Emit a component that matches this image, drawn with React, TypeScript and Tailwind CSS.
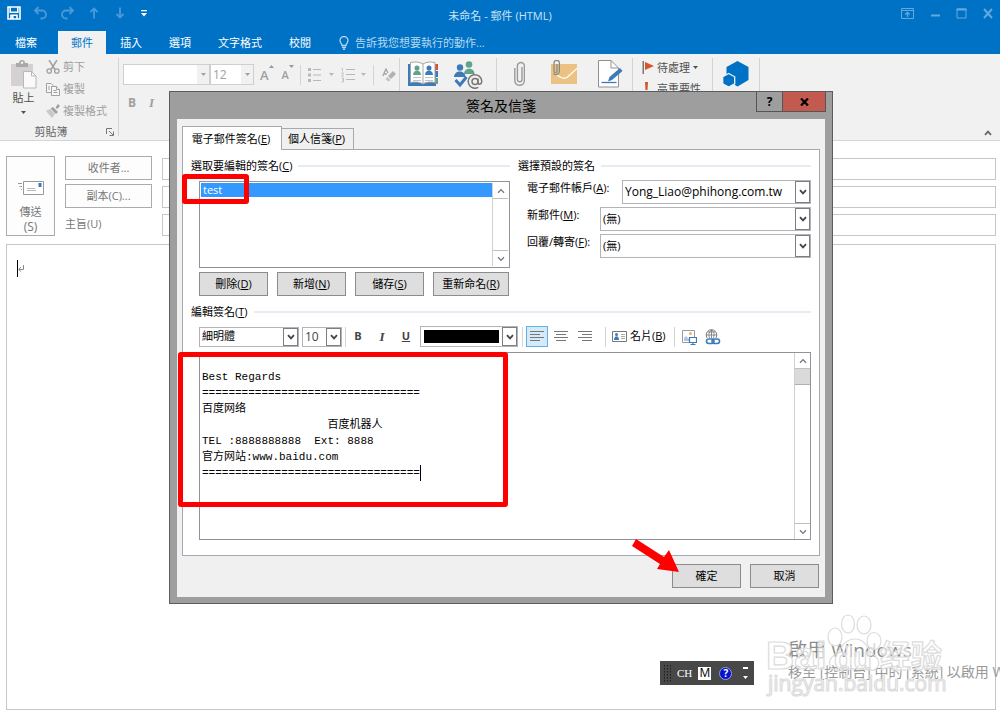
import { useState } from "react";
import type { ReactNode } from "react";

const signatureText = [
  "",
  "Best Regards",
  "=================================",
  "百度网络",
  "                   百度机器人",
  "TEL :8888888888  Ext: 8888",
  "官方网站:www.baidu.com",
  "=================================",
].join("\n");

const Caret = ({ className = "" }: { className?: string }) => (
  <svg width="5" height="3" viewBox="0 0 5 3" className={className}>
    <path d="M0 0h5L2.5 3z" fill="currentColor" />
  </svg>
);

const Chevron = ({ up = false, bold = false }) => (
  <svg width="8" height="6" viewBox="0 0 8 6" fill="none">
    <path
      d={up ? "M1 4.8L4 1.6l3 3.2" : "M1 1.2l3 3.2 3-3.2"}
      stroke="currentColor"
      strokeWidth={bold ? 1.8 : 1.3}
    />
  </svg>
);

const Divider = ({ className = "" }: { className?: string }) => (
  <div className={`w-px shrink-0 bg-[#d4d4d4] ${className}`} />
);

const QuickAccess = () => (
  <div className="flex items-center gap-3 pl-[7px] text-[#4b9ad7]">
    <button aria-label="儲存" className="text-white">
      <svg width="14" height="14" viewBox="0 0 14 14" fill="none">
        <path
          d="M1 1h12v12H1zM3.2 1v5.2h7.6V1M4 13V9.3h6V13"
          stroke="currentColor"
          strokeWidth="1.6"
        />
        <path d="M4.6 10h2v3h-2z" fill="currentColor" />
      </svg>
    </button>
    <button aria-label="復原">
      <svg width="15" height="14" viewBox="0 0 15 14" fill="none">
        <path
          d="M5.5 1L2 4.5 5.5 8M2 4.5h7a4 4 0 0 1 0 8H7.5"
          stroke="currentColor"
          strokeWidth="1.8"
        />
      </svg>
    </button>
    <button aria-label="重複">
      <svg width="15" height="14" viewBox="0 0 15 14" fill="none">
        <path
          d="M9.5 1L13 4.5 9.5 8M13 4.5H6a4 4 0 0 0 0 8h1.5"
          stroke="currentColor"
          strokeWidth="1.8"
        />
      </svg>
    </button>
    <button aria-label="上一個項目" className="px-0.5">
      <svg width="10" height="12" viewBox="0 0 10 12" fill="none">
        <path d="M5 11.5v-10M1.5 5L5 1.5 8.5 5" stroke="currentColor" strokeWidth="1.8" />
      </svg>
    </button>
    <button aria-label="下一個項目" className="px-0.5">
      <svg width="10" height="12" viewBox="0 0 10 12" fill="none">
        <path d="M5 .5v10M1.5 7L5 10.500 8.500 7" stroke="currentColor" strokeWidth="1.8" />
      </svg>
    </button>
    <button aria-label="自訂快速存取工具列" className="pl-0.5 text-white">
      <svg width="6" height="7" viewBox="0 0 6 7" fill="currentColor">
        <path d="M0 0h6v1.3H0zM0 3h6L3 6.5z" />
      </svg>
    </button>
  </div>
);

const WindowControls = () => (
  <div className="flex items-center gap-[15px] pr-1.5 text-[#62a9de]">
    <button aria-label="功能區顯示選項">
      <svg width="13" height="11" viewBox="0 0 13 11" fill="none" stroke="currentColor">
        <path d="M.5.5h12v10H.5zM.5 2.5h12" />
        <path d="M6.5 9V4.5M4.3 6.5l2.2-2.2 2.2 2.2" strokeWidth="1.3" />
      </svg>
    </button>
    <button aria-label="最小化">
      <svg width="12" height="11" viewBox="0 0 12 11">
        <path d="M2 6.5h9v2H2z" fill="currentColor" />
      </svg>
    </button>
    <button aria-label="最大化">
      <svg width="11" height="11" viewBox="0 0 11 11" fill="none" stroke="currentColor">
        <path d="M1 1h9v9H1z" />
        <path d="M.5 1.5h10" strokeWidth="2" />
      </svg>
    </button>
    <button aria-label="關閉">
      <svg width="12" height="11" viewBox="0 0 12 11" stroke="currentColor" strokeWidth="2">
        <path d="M2 1l8 9M10 1L2 10" />
      </svg>
    </button>
  </div>
);

const ClipboardGroup = () => (
  <div className="flex w-[118px] flex-col pl-2 pr-1 pt-0.5 text-[#a0a0a0]">
    <div className="flex h-[66px]">
      <button className="flex w-[31px] flex-col items-center pt-1 text-[#505050]">
        <svg width="27" height="29" viewBox="0 0 27 29" className="shrink-0">
          <path d="M1 4h22v22H1z" fill="#d5d1d3" />
          <path d="M6 3h3a3 3 0 0 1 6 0h3v4H6z" fill="#a9a9a9" />
          <circle cx="12" cy="2.8" r="1.3" fill="#f1f1f1" />
          <path d="M13.5 11.5h8l4.5 4.5v12H13.500z" fill="#fafafa" stroke="#b8b8b8" />
          <path d="M21.5 11.5V16H26" fill="none" stroke="#b8b8b8" />
        </svg>
        <span className="text-[11px] leading-[18px] whitespace-nowrap">貼上</span>
        <Caret className="mt-1 shrink-0" />
      </button>
      <div className="ml-[7px] flex flex-col text-[11px] leading-[22px]">
        <button className="flex items-center gap-[3px]">
          <svg width="14" height="14" viewBox="0 0 14 14" fill="none" stroke="currentColor">
            <path d="M3 0l6 9.500M11 0L5 9.500" strokeWidth="1.5" />
            <circle cx="3.2" cy="11" r="2.2" strokeWidth="1.3" />
            <circle cx="10.8" cy="11" r="2.2" strokeWidth="1.3" />
          </svg>
          剪下
        </button>
        <button className="flex items-center gap-[3px]">
          <svg width="14" height="13" viewBox="0 0 14 13" fill="#f6f6f6" stroke="currentColor">
            <path d="M.5.5H5l2 2v7H.5z" />
            <path d="M5.5 3.5h5l3 3v6h-8z" />
            <path d="M2 4h2M2 6h2M7.5 7.5h3M7.5 9.5h4M10.5 3.5v3h3" />
          </svg>
          複製
        </button>
        <button className="flex items-center gap-[3px] whitespace-nowrap">
          <svg width="14" height="14" viewBox="0 0 14 14">
            <path d="M0 7l4-2 5 5-3 4z" fill="#cbc6c9" />
            <path d="M4.5 4.5L7 3l5 5-2 2zM9.5 3.5L12 0l2 2-3 3z" fill="currentColor" />
          </svg>
          複製格式
        </button>
      </div>
    </div>
    <div className="flex items-center text-[11px] leading-5 text-[#666]">
      <span className="flex-1 pr-3 text-center">剪貼簿</span>
      <button aria-label="剪貼簿選項">
        <svg width="8" height="8" viewBox="0 0 8 8" fill="none" stroke="#777">
          <path d="M.5 6V.5H6M3 3l4 4M7.5 3.5v4h-4" />
        </svg>
      </button>
    </div>
  </div>
);

const FontGroup = () => (
  <div className="flex w-[280px] flex-col pl-1 pt-2.5 text-[#a0a0a0]">
    <div className="flex h-[21px] items-center">
      <div className="flex h-full w-[87px] border border-[#cfcfcf] bg-white">
        <input aria-label="字型" className="min-w-0 flex-1 outline-none" />
        <button aria-label="選擇字型" className="flex w-3 items-center justify-center bg-[#f1f1f1]">
          <Caret />
        </button>
      </div>
      <div className="flex h-full w-11 border border-[#cfcfcf] bg-white">
        <input
          aria-label="字型大小"
          defaultValue="12"
          className="min-w-0 flex-1 pl-0.5 text-[12px] outline-none"
        />
        <button aria-label="選擇大小" className="flex w-3 items-center justify-center bg-[#f1f1f1]">
          <Caret />
        </button>
      </div>
      <button aria-label="放大字型" className="ml-1.5 flex text-[13px] leading-5 font-semibold">
        A
        <svg width="5" height="3" viewBox="0 0 5 3">
          <path d="M0 3l2.5-3L5 3z" fill="#999" />
        </svg>
      </button>
      <button aria-label="縮小字型" className="ml-2 flex text-[11px] leading-5 font-semibold">
        A
        <svg width="5" height="3" viewBox="0 0 5 3">
          <path d="M0 0h5L2.5 3z" fill="#999" />
        </svg>
      </button>
      <Divider className="ml-1.5 h-5" />
      <button aria-label="項目符號" className="ml-[7px] flex items-center gap-2 text-[#b8b8b8]">
        <svg width="13" height="14" viewBox="0 0 13 14" fill="currentColor">
          <path d="M0 0h3v3H0zM0 5.5h3v3H0zM0 11h3v3H0zM5 1h8v1H5zM5 6.5h8v1H5zM5 12h8v1H5z" />
        </svg>
        <Caret />
      </button>
      <button aria-label="編號" className="ml-[7px] flex items-center gap-1.5 text-[#b8b8b8]">
        <svg width="14" height="16" viewBox="0 0 14 16" fill="none" stroke="currentColor">
          <path d="M5 2.5h9M5 7.5h9M5 12.5h9" />
          <path d="M.5 1.5h1v3M.5 6h2L.8 9h2M.5 11h2v2h-1 1v2h-2" strokeWidth=".8" />
        </svg>
        <Caret />
      </button>
      <Divider className="ml-[7px] h-5" />
      <button aria-label="清除格式設定" className="ml-2">
        <svg width="14" height="14" viewBox="0 0 14 14">
          <path d="M.8 8L4 1l2 4M2 6h3" fill="none" stroke="#a8a8a8" strokeWidth="1.4" />
          <path d="M6 8l5-5 3 3-5 5z" fill="#b5b0b3" />
          <path d="M5.5 9l3 3-2 1.5L3.500 11z" fill="#c4bfc2" />
        </svg>
      </button>
    </div>
    <div className="mt-2 flex gap-[13px] pl-[5px] text-[12px] leading-5">
      <button className="font-bold">B</button>
      <button className="font-['Liberation_Serif',serif] text-[13px] font-bold italic">I</button>
    </div>
  </div>
);

const NamesGroup = () => (
  <div className="flex w-24 items-start gap-4 pl-2 pt-[7px]">
    <button aria-label="通訊錄">
      <svg width="30" height="27" viewBox="0 0 30 27">
        <path d="M0 3h28v22H0z" fill="#3d7ab8" />
        <path d="M27 3h3v6h-3z" fill="#d9532c" />
        <path d="M27 10h3v6h-3z" fill="#3d7ab8" />
        <path d="M27 17h3v6h-3z" fill="#5fa38c" />
        <path
          d="M2.5 1.500C7 .5 12 1 15 3c3-2 7-2.500 12-1.500v20c-5-1-9-.5-12 1.500-3-2-8-2.500-12.500-1.500z"
          fill="#fff"
          stroke="#a5a5a5"
        />
        <path d="M15 3v20" stroke="#a5a5a5" />
        <circle cx="9" cy="7" r="2.500" fill="#5fa38c" />
        <path d="M5 14c0-6 8-6 8 0z" fill="#5fa38c" />
        <circle cx="21" cy="7" r="2.500" fill="#3d7ab8" />
        <path d="M17 14c0-6 8-6 8 0z" fill="#3d7ab8" />
        <path d="M5 16.500h8M5 19.500h8M17 16.500h8M17 19.500h8" stroke="#c4c4c4" />
      </svg>
    </button>
    <button aria-label="檢查名稱">
      <svg width="29" height="29" viewBox="0 0 29 29">
        <circle cx="15" cy="3.500" r="3.300" fill="#5fa38c" />
        <path d="M10 13c0-7 10.500-7 10.500 0z" fill="#5fa38c" />
        <circle cx="6" cy="6.500" r="3.800" fill="#f1f1f1" />
        <circle cx="6" cy="6.500" r="3.200" fill="#3d7ab8" />
        <path d="M0 16c0-7.500 11.500-7.500 11.500 0z" fill="#3d7ab8" />
        <path d="M1.500 19l4.500 5 6.500-8" fill="none" stroke="#3d7ab8" strokeWidth="3" />
        <g fill="none" stroke="#777" strokeWidth="1.500">
          <circle cx="21" cy="20.500" r="3" />
          <path d="M24 17.500V22c0 2 3.800 1.500 3.800-1.800a6.800 6.800 0 1 0-3.500 6.200" />
        </g>
      </svg>
    </button>
  </div>
);

const IncludeGroup = () => (
  <div className="flex w-[135px] items-start pl-[17px] pt-1.5 pr-2">
    <button aria-label="附加檔案">
      <svg width="11" height="27" viewBox="0 0 11 27" fill="none">
        <path
          d="M8 7v12.500a2.300 2.300 0 0 1-4.600 0V6a3.500 3.500 0 0 1 7 0v14.500a4.800 4.800 0 0 1-9.600 0V8"
          stroke="#9a9a9a"
          strokeWidth="1.400"
        />
      </svg>
    </button>
    <button aria-label="附加項目" className="ml-[25px]">
      <svg width="27" height="24" viewBox="0 0 27 24" fill="none">
        <path d="M1 4h26v20H1z" fill="#ebc283" />
        <path d="M5 14l6 3.500c2 1 4 1 6 0L27 8.500" stroke="#fff" strokeWidth="1.300" />
        <path
          d="M7 4v7a1.500 1.500 0 0 1-3 0V3a2.700 2.700 0 0 1 5.400 0v8.500a3.500 3.500 0 0 1-6 2"
          stroke="#858585"
          strokeWidth="1.200"
        />
      </svg>
    </button>
    <button aria-label="簽名" className="ml-[21px]">
      <svg width="26" height="28" viewBox="0 0 26 28">
        <path d="M.5.5H13l7.500 7.500v19H.5z" fill="#fff" stroke="#909090" />
        <path d="M13 .5V8h7.500" fill="none" stroke="#909090" />
        <path d="M3.500 22.500h15" stroke="#3d7ab8" strokeWidth="1.300" />
        <path d="M10 21.500l1.500-4.500L22 8l2.500 3L14 20z" fill="#3d7ab8" />
      </svg>
    </button>
  </div>
);

const TagsGroup = () => (
  <div className="flex w-[79px] flex-col pl-[9px] pt-[3px] text-[11px] leading-[21px] text-[#505050]">
    <button className="flex items-center whitespace-nowrap">
      <svg width="12" height="14" viewBox="0 0 12 14" className="mr-[3px]">
        <path d="M.5 0h1.500v13H.5z" fill="#777" />
        <path d="M3 1l9 4-9 4z" fill="#d9532c" />
      </svg>
      待處理
      <Caret className="ml-[3px]" />
    </button>
    <button className="flex items-center whitespace-nowrap">
      <svg width="12" height="13" viewBox="0 0 12 13" className="mr-[3px]">
        <path d="M3 0h3l-.5 8h-2zM3.500 10h2v2.500h-2z" fill="#d9532c" />
      </svg>
      高重要性
    </button>
  </div>
);

const Ribbon = () => (
  <div className="flex h-[87px] border-b border-[#d5d5d5] bg-[#f1f1f1]">
    <ClipboardGroup />
    <Divider className="my-1" />
    <FontGroup />
    <Divider className="my-1" />
    <NamesGroup />
    <Divider className="my-1" />
    <IncludeGroup />
    <Divider className="my-1" />
    <TagsGroup />
    <Divider className="my-1" />
    <div className="flex w-[46px] items-start justify-center pt-[7px]">
      <button aria-label="Office 增益集">
        <svg width="26" height="26" viewBox="0 0 26 26">
          <path d="M14.500 0L25.500 6v13l-11 6.500L3.500 19V6z" fill="#0072c6" />
          <path d="M5.700 12.500l6 3.300v7l-6 3.200-6-3.200v-7z" fill="#0072c6" stroke="#f1f1f1" strokeWidth="1.300" />
        </svg>
      </button>
    </div>
    <Divider className="my-1" />
    <button aria-label="摺疊功能區" className="ml-auto self-end px-2 py-1 text-[#666]">
      <Chevron up bold />
    </button>
  </div>
);

const ComposeHeader = () => (
  <div className="flex pl-1.5 pr-1 pt-[15px] text-[12px] text-[#777]">
    <button className="flex h-20 w-[49px] flex-col items-center border border-[#ababab] bg-[#fdfdfd] pt-6">
      <svg width="26" height="14" viewBox="0 0 26 14" fill="none">
        <path d="M5.500.5h20v13h-20z" fill="#fff" stroke="#999" />
        <path d="M20.500 2h3v4h-3z" fill="#3d7ab8" />
        <path d="M9 7.500h8M9 9.500h9" stroke="#bbb" />
        <path d="M0 2.500h4M1.500 5.500H4M3 8.500h1" stroke="#999" />
      </svg>
      <span className="mt-2 text-[11px] leading-[18px]">傳送</span>
      <span className="leading-3">(S)</span>
    </button>
    <div className="ml-2.5 flex w-[87px] flex-col gap-1">
      <button className="h-6 border border-[#ababab] bg-[#fdfdfd] text-[11px]">收件者...</button>
      <button className="h-6 border border-[#ababab] bg-[#fdfdfd] text-[11px]">副本(C)...</button>
      <label htmlFor="subject" className="text-[11px] leading-6">
        主旨(U)
      </label>
    </div>
    <div className="ml-2.5 flex flex-1 flex-col gap-1.5 pt-0.5">
      <input aria-label="收件者" className="h-[22px] border border-[#c6c6c6]" />
      <input aria-label="副本" className="h-[22px] border border-[#c6c6c6]" />
      <input id="subject" className="h-[22px] border border-[#c6c6c6]" />
    </div>
  </div>
);

const SectionTitle = ({ children }: { children: ReactNode }) => (
  <div className="flex items-center gap-1.5">
    <h3 className="text-[11px] leading-4 whitespace-nowrap">{children}</h3>
    <div className="h-0.5 flex-1 bg-[#e6ecf1]" />
  </div>
);

type PickerProps = {
  id?: string;
  label?: string;
  options: string[];
  className: string;
};

const Picker = ({ id, label, options, className }: PickerProps) => (
  <div className={`flex border border-[#b4b4b8] bg-white ${className}`}>
    <select
      id={id}
      aria-label={label}
      className="min-w-0 flex-1 appearance-none bg-transparent pl-0.5 outline-none"
    >
      {options.map((o) => (
        <option key={o}>{o}</option>
      ))}
    </select>
    <div className="pointer-events-none flex w-[15px] items-center justify-center border border-[#7d7d85] text-[#444]">
      <Chevron bold />
    </div>
  </div>
);

const DialogButton = ({ children, className = "w-[69px]" }: { children: ReactNode; className?: string }) => (
  <button
    className={`h-6 border border-[#8c8c8c] bg-[#dedede] text-[11px] leading-4 whitespace-nowrap ${className}`}
  >
    {children}
  </button>
);

const ScrollBar = ({ thumb = false }) => (
  <div className="flex w-4 shrink-0 flex-col border-l border-[#d0d0d0] text-[#777]">
    <button aria-label="向上捲動" className="flex h-4 items-center justify-center border-b border-[#c0c0c0]">
      <Chevron up />
    </button>
    {thumb && <div className="h-4 border-b border-[#b0b0b0] bg-[#dadada]" />}
    <button
      aria-label="向下捲動"
      className="mt-auto flex h-4 items-center justify-center border-t border-[#c0c0c0]"
    >
      <Chevron />
    </button>
  </div>
);

const AlignIcon = ({ d }: { d: string }) => (
  <svg width="14" height="11" viewBox="0 0 14 11" stroke="#777" fill="none">
    <path d={d} />
  </svg>
);

const SignatureToolbar = () => (
  <div className="flex h-[21px] items-center text-[#444]">
    <Picker label="字型" options={["細明體"]} className="h-5 w-[100px] text-[11px] text-black" />
    <Picker label="字型大小" options={["10"]} className="ml-[3px] h-5 w-10 text-[12px]" />
    <Divider className="ml-[3px] h-5 bg-[#b4b4b4]" />
    <button className="ml-0.5 w-5 text-center text-[11px] font-bold">B</button>
    <button className="ml-1 w-5 text-center font-['Liberation_Serif',serif] text-[13px] font-bold italic">
      I
    </button>
    <button className="ml-1 w-5 text-center text-[11px] font-bold underline">U</button>
    <div className="ml-1 flex h-[21px] w-[98px] border border-[#b4b4b8] bg-white">
      <button aria-label="字型色彩" className="m-[3px] flex-1 bg-black" />
      <button
        aria-label="選擇色彩"
        className="flex w-[15px] items-center justify-center border border-[#7d7d85]"
      >
        <Chevron bold />
      </button>
    </div>
    <Divider className="ml-1 h-5 bg-[#b4b4b4]" />
    <button
      aria-label="靠左對齊"
      className="ml-[3px] flex h-[21px] w-[22px] items-center justify-center border border-[#5db1e6] bg-[#d4eafa]"
    >
      <AlignIcon d="M0 .5h14M0 3.500h10M0 6.500h14M0 9.500h10" />
    </button>
    <button aria-label="置中" className="ml-1.5">
      <AlignIcon d="M0 .5h14M2 3.500h10M0 6.500h14M2 9.500h10" />
    </button>
    <button aria-label="靠右對齊" className="ml-2.5">
      <AlignIcon d="M0 .5h14M4 3.500h10M0 6.500h14M4 9.500h10" />
    </button>
    <Divider className="ml-[13px] h-5 bg-[#b4b4b4]" />
    <button className="ml-1.5 flex items-center gap-[3px] text-[11px] whitespace-nowrap text-black">
      <svg width="15" height="11" viewBox="0 0 15 11">
        <path d="M.5.5h14v10H.5z" fill="#fff" stroke="#777" />
        <circle cx="4.500" cy="3.500" r="1.500" fill="#3d7ab8" />
        <path d="M2 9c0-5 5-5 5 0z" fill="#3d7ab8" />
        <path d="M9 3.500h4M9 5.500h4M9 7.500h4" stroke="#aaa" />
      </svg>
      <span>
        名片(<u>B</u>)
      </span>
    </button>
    <Divider className="ml-2 h-5 bg-[#b4b4b4]" />
    <button aria-label="圖片" className="ml-[7px]">
      <svg width="15" height="16" viewBox="0 0 15 16">
        <path d="M.5 1.500h12v12H.5z" fill="#fff" stroke="#9a9a9a" />
        <path d="M2 12V9l2-2 3 3v2z" fill="#a9c9e6" />
        <circle cx="8.500" cy="4.500" r="1.500" fill="#e8b26a" />
        <path d="M7.500 8.500h7v5h-7z" fill="#fff" stroke="#3d7ab8" strokeWidth="1.200" />
        <path d="M11 13.500V15M8.500 15.500h5" stroke="#3d7ab8" strokeWidth="1.200" />
      </svg>
    </button>
    <button aria-label="超連結" className="ml-2">
      <svg width="16" height="16" viewBox="0 0 16 16" fill="none">
        <circle cx="6.500" cy="6" r="5.300" stroke="#808080" />
        <path
          d="M1 6h11M6.500.7v10.500M2.500 3h8M6.500.7C3 3.700 3 7.700 6.500 11.200M6.500.7c3.500 3 3.500 7 0 10.500"
          stroke="#808080"
          strokeWidth=".9"
        />
        <path d="M0 9h16v7H0z" fill="#fff" />
        <rect x="1.500" y="10" width="7.500" height="4.500" rx="2.200" stroke="#3d7ab8" strokeWidth="1.600" />
        <rect x="7" y="10" width="7.500" height="4.500" rx="2.200" stroke="#3d7ab8" strokeWidth="1.600" />
      </svg>
    </button>
  </div>
);

const SignatureDialog = () => {
  const [signature, setSignature] = useState(signatureText);

  return (
    <div
      role="dialog"
      aria-labelledby="dialog-title"
      className="relative flex w-[664px] flex-col border border-[#5c5c5c] bg-[#9e9e9e] px-[7px] pb-1.5 text-black"
    >
      <div className="relative flex h-[27px] items-center justify-center">
        <h2 id="dialog-title" className="text-[14px] leading-5">
          簽名及信箋
        </h2>
        <div className="absolute top-0 -right-px flex h-5 border border-t-0 border-[#555] text-[12px] font-bold">
          <button aria-label="說明" className="w-[26px] border-r border-[#555] leading-4">
            ?
          </button>
          <button aria-label="關閉" className="flex w-[42px] items-center justify-center bg-[#c25a50]">
            <svg width="9" height="8" viewBox="0 0 9 8" stroke="#000" strokeWidth="2.200">
              <path d="M1 .5l7 7M8 .5l-7 7" />
            </svg>
          </button>
        </div>
      </div>

      <div className="flex flex-col bg-[#f0f0f0] px-[5px] pt-[7px] pb-[9px]">
        <div role="tablist" className="flex items-end text-[11px] leading-5">
          <button
            role="tab"
            aria-selected="true"
            className="relative z-10 -mb-px h-6 w-[100px] border border-b-0 border-[#a5a9b2] bg-white pr-0.5 whitespace-nowrap"
          >
            電子郵件簽名(<u>E</u>)
          </button>
          <button
            role="tab"
            aria-selected="false"
            className="h-[21px] w-[72px] border border-b-0 border-l-0 border-[#a5a9b2] pr-0.5 whitespace-nowrap"
          >
            個人信箋(<u>P</u>)
          </button>
        </div>

        <div className="flex flex-col border border-[#a5a9b2] bg-white px-2 pt-2 pb-[15px]">
          <div className="flex gap-2">
            <div className="flex w-[319px] flex-col">
              <SectionTitle>
                選取要編輯的簽名(<u>C</u>)
              </SectionTitle>
              <div className="mt-[7px] ml-2 flex h-[87px] border border-[#8f949c] p-px">
                <ul role="listbox" aria-label="簽名" className="flex-1 text-[11px] leading-[14px]">
                  <li role="option" aria-selected="true" className="bg-[#3399ff] pl-0.5 text-white">
                    test
                  </li>
                </ul>
                <ScrollBar />
              </div>
              <div className="mt-1 ml-2 flex gap-[9px]">
                <DialogButton>
                  刪除(<u>D</u>)
                </DialogButton>
                <DialogButton>
                  新增(<u>N</u>)
                </DialogButton>
                <DialogButton>
                  儲存(<u>S</u>)
                </DialogButton>
                <DialogButton className="w-[76px]">
                  重新命名(<u>R</u>)
                </DialogButton>
              </div>
            </div>

            <div className="flex flex-1 flex-col">
              <SectionTitle>選擇預設的簽名</SectionTitle>
              <div className="mt-1.5 flex flex-col gap-[3px] pl-[9px] text-[11px]">
                <div className="flex">
                  <label htmlFor="account" className="w-[95px] leading-4 whitespace-nowrap">
                    電子郵件帳戶(<u>A</u>):
                  </label>
                  <Picker
                    id="account"
                    options={["Yong_Liao@phihong.com.tw"]}
                    className="h-6 flex-1 text-[12px]"
                  />
                </div>
                <div className="flex">
                  <label htmlFor="new-mail" className="w-[73px] leading-4 whitespace-nowrap">
                    新郵件(<u>M</u>):
                  </label>
                  <Picker id="new-mail" options={["(無)"]} className="h-6 flex-1" />
                </div>
                <div className="flex">
                  <label htmlFor="reply" className="w-[73px] leading-4 whitespace-nowrap">
                    回覆/轉寄(<u>F</u>):
                  </label>
                  <Picker id="reply" options={["(無)"]} className="h-6 flex-1" />
                </div>
              </div>
            </div>
          </div>

          <div className="mt-2">
            <SectionTitle>
              編輯簽名(<u>T</u>)
            </SectionTitle>
          </div>
          <div className="mt-1.5 flex flex-col gap-[5px] pl-2">
            <SignatureToolbar />
            <div className="relative flex h-[188px] border border-[#8f949c]">
              <textarea
                aria-label="編輯簽名"
                value={signature}
                onChange={(e) => setSignature(e.target.value)}
                className="flex-1 resize-none overflow-hidden pl-0.5 font-['Liberation_Mono','Noto_Sans_CJK_SC',monospace] text-[11px] leading-4 whitespace-pre outline-none"
              />
              <div className="absolute top-28 left-[220px] h-4 w-px bg-black" />
              <ScrollBar thumb />
            </div>
          </div>
        </div>

        <div className="mt-2 flex justify-end gap-[9px] pr-px">
          <DialogButton>確定</DialogButton>
          <DialogButton>取消</DialogButton>
        </div>
      </div>

      {/* red callouts */}
      <div className="pointer-events-none absolute top-[82px] left-3 z-20 h-[30px] w-[67px] rounded-[3px] border-[5px] border-[#fe0000]" />
      <div className="pointer-events-none absolute top-[260px] left-2 z-20 h-[155px] w-[330px] rounded-[3px] border-[5px] border-[#fe0000]" />
      <svg
        width="48"
        height="36"
        viewBox="0 0 48 36"
        className="pointer-events-none absolute top-[447px] left-[462px] z-20"
      >
        <path d="M4 0L32 18l5-7L47 33 25 30l3-5L0 7z" fill="#fe0000" />
      </svg>
    </div>
  );
};

const LanguageBar = () => (
  <div className="flex h-6 w-[94px] items-center bg-[#484848] pl-1 text-white">
    <svg width="8" height="17" viewBox="0 0 8 17" stroke="#1c1c1c" strokeDasharray="1.500 1.500">
      <path d="M.5 0v17M3.500 0v17M6.500 0v17" />
    </svg>
    <button className="ml-[5px] font-['Liberation_Serif',serif] text-[11px]">CH</button>
    <button className="ml-1.5 flex h-[13px] w-[13px] items-center justify-center bg-white text-[12px] text-black">
      M
    </button>
    <button
      aria-label="說明"
      className="ml-2 flex h-[13px] w-[13px] items-center justify-center rounded-full border border-[#8a9cf0] bg-[#0a12c8] text-[10px] font-bold"
    >
      ?
    </button>
    <button aria-label="選項" className="ml-[11px]">
      <svg width="5" height="12" viewBox="0 0 5 12" fill="#fff">
        <path d="M0 0h5v2H0zM0 9h5l-2.500 3z" />
      </svg>
    </button>
  </div>
);

const SiteMark = () => (
  <svg width="184" height="88" viewBox="0 0 184 88">
    <g fill="#fff" fillOpacity=".65" stroke="#dcdcdc" strokeWidth="1.200">
      <ellipse cx="84" cy="14" rx="6.500" ry="9" />
      <ellipse cx="100" cy="15" rx="7" ry="9" />
      <ellipse cx="71" cy="27" rx="7" ry="9" />
      <ellipse cx="110" cy="31" rx="7" ry="8.500" />
      <path
        d="M66 56c-3-8 6-11 11-18 7-12 21-12 27 0 4 7 14 11 10 18-2 5-6 5-10 4-9-2-16-2-24 0-6 2-12 0-14-4z"
        fill="none"
      />
      <g fontFamily="Liberation Sans, Noto Sans CJK SC, sans-serif" fontWeight="bold">
        <text x="2" y="59" fontSize="39">
          Bai
        </text>
        <text x="70" y="59" fontSize="31">
          du
        </text>
        <text x="116" y="57" fontSize="31">
          经验
        </text>
      </g>
      <text x="4" y="81" fontFamily="Open Sans, sans-serif" fontSize="21">
        jingyan.baidu.com
      </text>
    </g>
  </svg>
);

const tabs = ["插入", "選項", "文字格式", "校閱"];

const App = () => (
  <div className="relative flex min-h-screen flex-col overflow-hidden bg-white font-['Open_Sans','Noto_Sans_CJK_TC',sans-serif]">
    <header className="bg-[#0072c6]">
      <div className="grid h-[31px] grid-cols-[1fr_auto_1fr] pb-[5px]">
        <QuickAccess />
        <h1 className="self-end text-[11px] leading-5 text-[#cbe3f5]">未命名 - 郵件 (HTML)</h1>
        <div className="flex justify-end">
          <WindowControls />
        </div>
      </div>
      <nav className="flex h-[23px] items-center text-[11px] leading-5 text-white">
        <button className="w-[58px] pr-1.5">檔案</button>
        <button className="h-full w-12 bg-[#f1f1f1] text-[#0072c6]">郵件</button>
        <div className="ml-3.5 flex gap-[27px]">
          {tabs.map((t) => (
            <button key={t}>{t}</button>
          ))}
        </div>
        <button className="ml-7 flex items-center gap-1.5 text-[#b5d8f1]">
          <svg width="10" height="14" viewBox="0 0 10 14" fill="none" stroke="currentColor" strokeWidth="1.300">
            <path d="M3 9.500C3 7.500 1 7 1 4.500a4 4 0 0 1 8 0C9 7 7 7.500 7 9.500zM3 11.500h4M4 13.300h2" />
          </svg>
          告訴我您想要執行的動作...
        </button>
      </nav>
    </header>
    <Ribbon />
    <ComposeHeader />
    <div className="relative mt-2 mr-1 mb-2 ml-1.5 flex flex-1 border border-[#c6c6c6]">
      <textarea aria-label="郵件內容" className="flex-1 resize-none p-2.5 text-[12px] outline-none" />
      <div className="pointer-events-none absolute top-[15px] left-2.5 flex items-center">
        <div className="h-[17px] w-px bg-black" />
        <svg width="7" height="7" viewBox="0 0 7 7" fill="none" stroke="#888">
          <path d="M5.500 0v4.500H1M3 2L.7 4.500 3 6.500" />
        </svg>
      </div>
    </div>

    <div className="absolute right-0 bottom-9 w-[212px] overflow-hidden whitespace-nowrap text-[#999]">
      <p className="text-[19px] leading-6 text-[#8c8c8c]">啟用 Windows</p>
      <p className="text-[14px] leading-5">移至 [控制台] 中的 [系統] 以啟用 Windows</p>
    </div>
    <div className="pointer-events-none absolute right-[52px] bottom-5">
      <SiteMark />
    </div>
    <div className="absolute right-[246px] bottom-[33px]">
      <LanguageBar />
    </div>

    <div className="absolute inset-x-0 top-[91px] flex justify-center pl-0.5">
      <SignatureDialog />
    </div>
  </div>
);

export default App;
